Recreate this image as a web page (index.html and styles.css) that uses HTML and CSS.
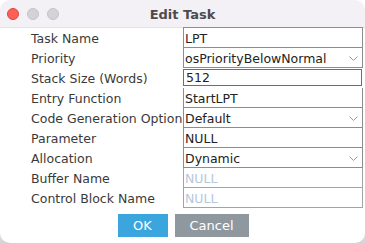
FILE: index.html
```html
<!DOCTYPE html>
<html>
<head>
<meta charset="utf-8">
<link rel="stylesheet" href="styles.css">
</head>
<body>
<div class="window">
  <div class="titlebar">
    <div class="lights">
      <span class="light red"></span>
      <span class="light gray"></span>
      <span class="light gray"></span>
    </div>
    <div class="title">Edit Task</div>
  </div>
  <div class="content">
    <div class="form">
      <div class="label">Task Name</div>
      <div class="field first"><span class="val">LPT</span></div>
      <div class="label">Priority</div>
      <div class="field combo"><span class="val">osPriorityBelowNormal</span><svg class="chev" width="9" height="5" viewBox="0 0 9 5"><polyline points="0.5,0.5 4.5,4.5 8.5,0.5" fill="none" stroke="#9a9a9a" stroke-width="1"/></svg></div>
      <div class="label">Stack Size (Words)</div>
      <div class="field focus"><span class="val inner">512</span></div>
      <div class="label">Entry Function</div>
      <div class="field"><span class="val">StartLPT</span></div>
      <div class="label">Code Generation Option</div>
      <div class="field combo"><span class="val">Default</span><svg class="chev" width="9" height="5" viewBox="0 0 9 5"><polyline points="0.5,0.5 4.5,4.5 8.5,0.5" fill="none" stroke="#9a9a9a" stroke-width="1"/></svg></div>
      <div class="label">Parameter</div>
      <div class="field"><span class="val">NULL</span></div>
      <div class="label">Allocation</div>
      <div class="field combo"><span class="val">Dynamic</span><svg class="chev" width="9" height="5" viewBox="0 0 9 5"><polyline points="0.5,0.5 4.5,4.5 8.5,0.5" fill="none" stroke="#9a9a9a" stroke-width="1"/></svg></div>
      <div class="label">Buffer Name</div>
      <div class="field disabled"><span class="val">NULL</span></div>
      <div class="label">Control Block Name</div>
      <div class="field disabled"><span class="val">NULL</span></div>
    </div>
    <div class="buttons">
      <button class="btn ok">OK</button>
      <button class="btn cancel">Cancel</button>
    </div>
  </div>
</div>
</body>
</html>
```
FILE: styles.css
```css
html, body {
  margin: 0;
  padding: 0;
}
body {
  width: 365px;
  height: 243px;
  overflow: hidden;
  background: linear-gradient(#ffffff 0%, #ffffff 85%, #d4d4d4 100%);
  font-family: "DejaVu Sans", "Liberation Sans", sans-serif;
}
.window {
  width: 365px;
  height: 243px;
  border-radius: 10px;
  overflow: hidden;
  background: #ffffff;
  display: flex;
  flex-direction: column;
}
.titlebar {
  height: 27px;
  background: #f3f1f6;
  border-bottom: 1px solid #e2e0e6;
  display: flex;
  align-items: center;
  position: relative;
}
.lights {
  display: flex;
  gap: 8px;
  padding-left: 7px;
  padding-top: 1px;
}
.light {
  width: 12px;
  height: 12px;
  border-radius: 50%;
  box-sizing: border-box;
}
.light.red {
  background: #fe5f57;
  border: 1px solid #e0443e;
}
.light.gray {
  background: #d3d2d6;
  border: 1px solid #c4c3c8;
}
.title {
  position: absolute;
  left: 0;
  right: 0;
  top: 0;
  bottom: 0;
  display: flex;
  align-items: center;
  justify-content: center;
  font-weight: bold;
  font-size: 13px;
  color: #4c4b50;
  padding-top: 1px;
}
.content {
  flex: 1;
  display: flex;
  flex-direction: column;
}
.form {
  display: grid;
  grid-template-columns: 152px 180px;
  grid-auto-rows: 20px;
  padding-left: 31px;
}
.label {
  font-size: 12.5px;
  color: #3a3a3a;
  white-space: nowrap;
  display: flex;
  align-items: center;
  padding-top: 1px;
}
.field {
  box-sizing: border-box;
  border-left: 1px solid #8d8d8d;
  border-right: 1px solid #8d8d8d;
  border-bottom: 1px solid #8d8d8d;
  display: flex;
  align-items: center;
  font-size: 12.5px;
  color: #222222;
  position: relative;
  background: #ffffff;
}
.field.first {
  border-top: 1px solid #8d8d8d;
  height: 21px;
  margin-top: -1px;
}
.val {
  padding-left: 1px;
  padding-top: 1px;
  white-space: nowrap;
}
.combo .chev {
  position: absolute;
  right: 4px;
  top: 8px;
}
.field.focus {
  border-bottom-color: #ffffff;
  border-right-color: #ffffff;
  border-left-color: #ffffff;
  padding: 1px 0 1px 0;
}
.field.focus .inner {
  flex: 1;
  align-self: stretch;
  border: 1px solid #6e6e6e;
  margin: 0 0 0 -1px;
  padding-left: 2px;
  padding-top: 0;
  display: flex;
  align-items: center;
}
.field.disabled {
  border-color: #a3a3a3;
  color: #b7c7da;
}
.buttons {
  display: flex;
  justify-content: center;
  gap: 7px;
  margin-top: 6px;
  padding-left: 1px;
}
.btn {
  height: 23px;
  border: none;
  border-radius: 0;
  color: #ffffff;
  font-family: "DejaVu Sans", "Liberation Sans", sans-serif;
  font-size: 13px;
  padding: 0;
}
.btn.ok {
  width: 50px;
  background: #3aa6dd;
}
.btn.cancel {
  width: 74px;
  background: #8f989f;
}
```
